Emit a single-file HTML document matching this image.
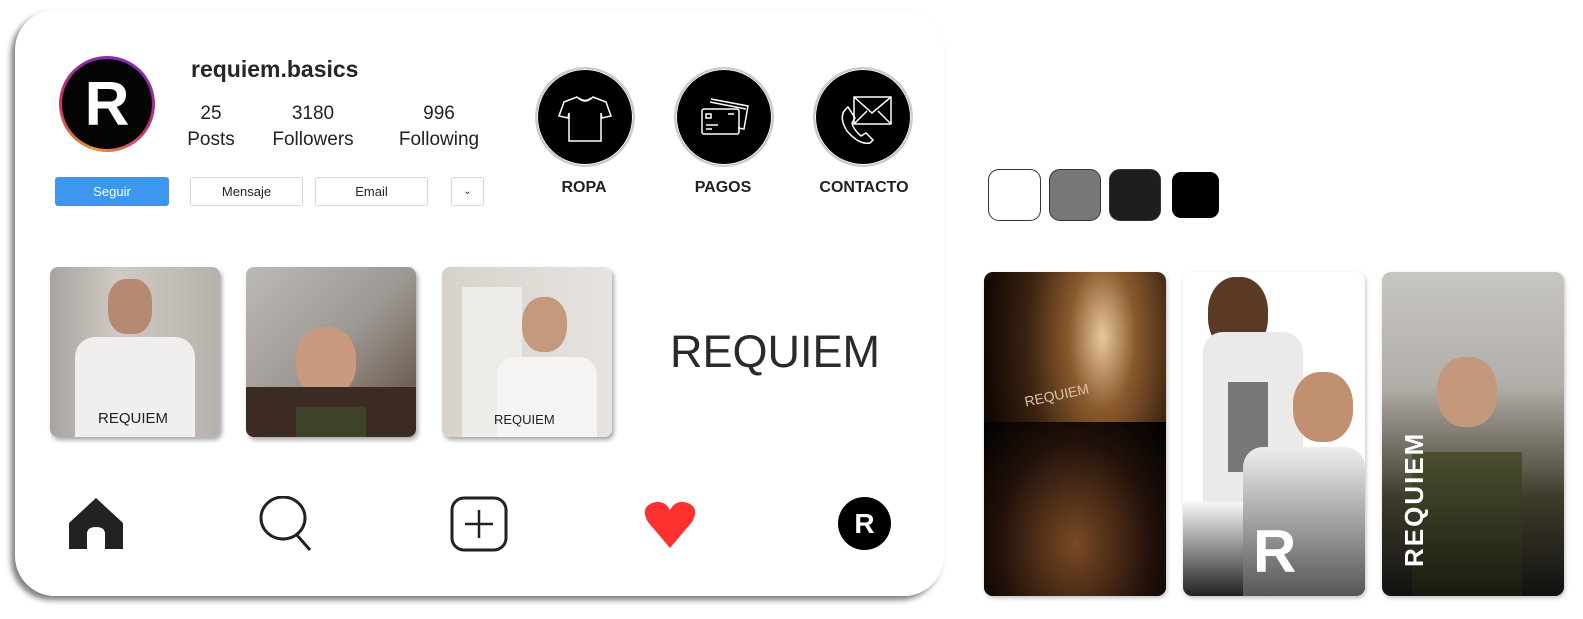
<!DOCTYPE html>
<html><head><meta charset="utf-8"><style>
body{margin:0;width:1583px;height:619px;background:#fff;position:relative;overflow:hidden;font-family:"Liberation Sans",sans-serif;color:#222}
.a{position:absolute}
.card{left:15px;top:10px;width:929px;height:586px;border-radius:40px;background:#fff;box-shadow:-4px 4px 6px rgba(0,0,0,.5)}
.btn{position:absolute;top:177px;height:27px;border:1px solid #d6d6d6;border-radius:3px;font-size:13px;text-align:center;line-height:27px;background:#fff;color:#222}
.stat{position:absolute;top:101px;text-align:center;font-size:19px;line-height:26px}
.hl{position:absolute;top:67px;width:96px;height:96px;border-radius:50%;background:#000;border:2px solid #ccc;box-shadow:0 0 0 1px #fff inset}
.hlt{position:absolute;top:179px;font-weight:bold;font-size:16px;text-align:center;width:140px}
.th{position:absolute;top:267px;width:170px;height:170px;border-radius:8px;box-shadow:2px 3px 5px rgba(0,0,0,.35);overflow:hidden}
.st{position:absolute;top:272px;width:182px;height:324px;border-radius:9px;overflow:hidden;box-shadow:1px 2px 4px rgba(0,0,0,.25)}
.sw{position:absolute;top:169px;width:50px;height:50px;border-radius:9px;border:1px solid #333;box-sizing:border-box}
</style></head><body>
<div class="a card"></div>
<div class="a" style="left:59px;top:56px;width:96px;height:96px;border-radius:50%;background:conic-gradient(from 200deg,#e0902c,#c9306a,#8a2bb0,#8a2bb0,#c9306a,#e8a040)"></div>
<div class="a" style="left:62px;top:59px;width:90px;height:90px;border-radius:50%;background:#050505;color:#fff;font-weight:bold;font-size:62px;text-align:center;line-height:92px">R</div>
<div class="a" style="left:191px;top:56px;font-size:23px;font-weight:bold;color:#262626">requiem.basics</div>
<div class="stat" style="left:181px;width:60px">25<br>Posts</div>
<div class="stat" style="left:266px;width:94px">3180<br>Followers</div>
<div class="stat" style="left:391px;width:96px">996<br>Following</div>
<div class="btn" style="left:55px;width:112px;background:#3d97f0;border-color:#3d97f0;color:#fff">Seguir</div>
<div class="btn" style="left:190px;width:111px">Mensaje</div>
<div class="btn" style="left:315px;width:111px">Email</div>
<div class="btn" style="left:451px;width:31px;font-size:10px">&#8964;</div>

<div class="hl" style="left:535px"><svg width="96" height="96" viewBox="0 0 96 96" fill="none" stroke="#fff" stroke-width="1.5"><path d="M40 28 L27 33 L22 47 L31 49 L32 44 L32 72 L64 72 L64 44 L65 49 L74 47 L69 33 L56 28 Q48 36 40 28 Z"/><path d="M42 29 Q48 34 54 29"/></svg></div>
<div class="hl" style="left:674px"><svg width="96" height="96" viewBox="0 0 96 96" fill="none" stroke="#fff" stroke-width="1.5"><path d="M35 30 L72 37 L68 60 L62 59"/><path d="M34 33 L70 40"/><rect x="26" y="40" width="37" height="25" rx="2"/><rect x="30" y="45" width="5" height="4"/><path d="M30 56 H42 M30 60 H36 M52 45 H58"/></svg></div>
<div class="hl" style="left:813px"><svg width="96" height="96" viewBox="0 0 96 96" fill="none" stroke="#fff" stroke-width="1.5"><rect x="39" y="28" width="37" height="27"/><path d="M39 28 L57 44 L76 28 M39 55 L52 42 M76 55 L63 42"/><path d="M33 38 Q22 46 32 62 Q44 76 55 74 L58 71 L51 64 L46 67 Q38 60 37 54 L40 49 L33 38 Z"/></svg></div>
<div class="hlt" style="left:514px">ROPA</div>
<div class="hlt" style="left:653px">PAGOS</div>
<div class="hlt" style="left:794px">CONTACTO</div>

<div class="th" style="left:50px;background:linear-gradient(90deg,#a8a39e,#cfcac4 40%,#b6b1ab)"><div class="a" style="left:58px;top:12px;width:44px;height:55px;border-radius:40%;background:#b58a72"></div><div class="a" style="left:25px;top:70px;width:120px;height:100px;background:#f0efed;border-radius:20px 20px 0 0"></div><div class="a" style="left:48px;top:143px;font-size:15px;color:#222">REQUIEM</div></div>
<div class="th" style="left:246px;background:linear-gradient(135deg,#bdb9b4,#9d9893 50%,#5a4538)"><div class="a" style="left:50px;top:60px;width:60px;height:70px;border-radius:45%;background:#c99a80"></div><div class="a" style="left:0;top:120px;width:170px;height:50px;background:#3b2b22"></div><div class="a" style="left:50px;top:140px;width:70px;height:30px;background:#3d4228"></div></div>
<div class="th" style="left:442px;background:linear-gradient(90deg,#d7d2cc,#e7e3de)"><div class="a" style="left:20px;top:20px;width:60px;height:150px;background:#eeece9"></div><div class="a" style="left:80px;top:30px;width:45px;height:55px;border-radius:45%;background:#c49a7e"></div><div class="a" style="left:55px;top:90px;width:100px;height:80px;background:#f5f4f2;border-radius:18px 18px 0 0"></div><div class="a" style="left:52px;top:145px;font-size:13px;color:#222">REQUIEM</div></div>
<div class="a" style="left:670px;top:326px;font-size:45px;letter-spacing:0px;color:#2a2a2a">REQUIEM</div>

<svg class="a" style="left:68px;top:496px" width="56" height="54" viewBox="0 0 56 54"><path d="M28 2 L55 27 L55 53 L37 53 L37 38 Q37 31 28 31 Q19 31 19 38 L19 53 L1 53 L1 27 Z" fill="#222"/></svg>
<svg class="a" style="left:258px;top:496px" width="56" height="56" viewBox="0 0 56 56" fill="none" stroke="#222" stroke-width="3"><ellipse cx="25" cy="22" rx="22" ry="21"/><path d="M38 38 L52 54"/></svg>
<svg class="a" style="left:450px;top:496px" width="58" height="56" viewBox="0 0 58 56" fill="none" stroke="#222" stroke-width="3"><rect x="2" y="2" width="54" height="52" rx="12"/><path d="M29 14 V42 M15 28 H43" stroke-width="2.5"/></svg>
<svg class="a" style="left:642px;top:500px" width="56" height="50" viewBox="0 0 56 50"><path d="M28 48 L6 22 Q-2 8 10 3 Q22 -1 28 10 Q34 -1 46 3 Q58 8 50 22 Z" fill="#ff3030"/></svg>
<div class="a" style="left:838px;top:497px;width:53px;height:53px;border-radius:50%;background:#000;color:#fff;font-weight:bold;font-size:28px;text-align:center;line-height:53px">R</div>

<div class="sw" style="left:988px;background:#fff;width:53px;height:52px;border-radius:11px"></div>
<div class="sw" style="left:1049px;background:#777;width:52px;height:52px;border-radius:11px"></div>
<div class="sw" style="left:1109px;background:#1e1e1e;width:52px;height:52px;border-radius:11px"></div>
<div class="sw" style="left:1172px;top:172px;background:#000;width:47px;height:46px;border:none"></div>

<div class="st" style="left:984px;background:radial-gradient(ellipse at 65% 20%,#e8c89a 0,#8a5a2e 20%,#3a2210 45%,#120804 70%),#000"><div class="a" style="left:0;top:150px;width:182px;height:174px;background:radial-gradient(ellipse at 50% 70%,#7a4a24,#20100a 60%,#000)"></div><div class="a" style="left:40px;top:115px;font-size:14px;color:#d8c4a8;transform:rotate(-12deg)">REQUIEM</div></div>
<div class="st" style="left:1183px;background:linear-gradient(180deg,#fff 0,#fff 70%,#222 100%)"><div class="a" style="left:25px;top:5px;width:60px;height:75px;border-radius:45%;background:#5a3a25"></div><div class="a" style="left:20px;top:60px;width:100px;height:170px;background:#ebeae8;border-radius:20px 20px 0 0"></div><div class="a" style="left:45px;top:110px;width:40px;height:90px;background:#777"></div><div class="a" style="left:110px;top:100px;width:60px;height:70px;border-radius:45%;background:#c09070"></div><div class="a" style="left:60px;top:175px;width:122px;height:150px;background:linear-gradient(#eee,#555);border-radius:20px 20px 0 0"></div><div class="a" style="left:70px;top:245px;font-size:60px;font-weight:bold;color:#fff">R</div></div>
<div class="st" style="left:1382px;background:linear-gradient(180deg,#c8c6c2 0,#b2aea9 35%,#3e3a2a 70%,#111 100%)"><div class="a" style="left:55px;top:85px;width:60px;height:70px;border-radius:45%;background:#c4987c"></div><div class="a" style="left:30px;top:180px;width:110px;height:144px;background:linear-gradient(#4b4e2e,#1a1a10)"></div><div class="a" style="left:-28px;top:220px;font-size:26px;font-weight:bold;color:#fff;letter-spacing:2px;transform:rotate(-90deg);transform-origin:center;width:120px;height:30px;line-height:30px">REQUIEM</div></div>
</body></html>
